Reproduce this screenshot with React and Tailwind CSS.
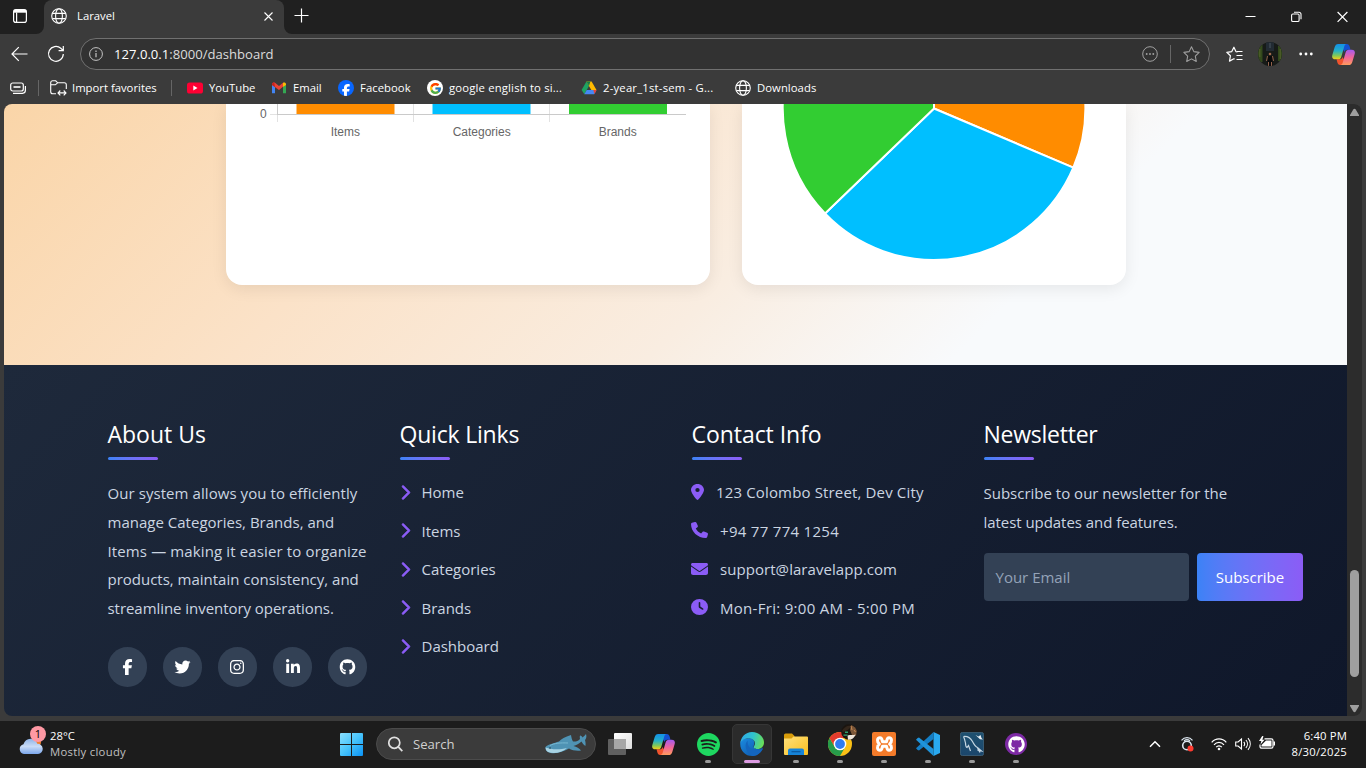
import React from "react";
import {
  FaFacebookF, FaTwitter, FaInstagram, FaLinkedinIn, FaGithub,
  FaLocationDot, FaPhone, FaEnvelope, FaClock, FaChevronRight,
} from "react-icons/fa6";
import { FcGoogle } from "react-icons/fc";
import { SiSpotify } from "react-icons/si";

const Globe = ({ className }) => (
  <svg className={className} viewBox="0 0 16 16" fill="none" stroke="currentColor" strokeWidth="1.1">
    <circle cx="8" cy="8" r="7.3" />
    <ellipse cx="8" cy="8" rx="3.4" ry="7.3" />
    <path d="M1.4 5.4h13.2M1.4 10.6h13.2" />
  </svg>
);

const Copilot = ({ className, id }) => (
  <svg className={className} viewBox="0 0 24 22">
    <defs>
      <linearGradient id={id + "a"} x1="0" y1="0" x2="0" y2="1">
        <stop offset="0" stopColor="#1390e8" /><stop offset=".45" stopColor="#25b0c8" />
        <stop offset=".75" stopColor="#7fc85a" /><stop offset="1" stopColor="#f5cf1a" />
      </linearGradient>
      <linearGradient id={id + "b"} x1="0" y1="0" x2="0" y2="1">
        <stop offset="0" stopColor="#a35af2" /><stop offset=".5" stopColor="#f0659a" /><stop offset="1" stopColor="#ff9a5c" />
      </linearGradient>
    </defs>
    <path d="M12 0h3.5c1.8 0 2.4 1 2.9 2.6L19.3 6h-3.5c-1.6 0-2.2.8-2.7 2.4L11 5Z" fill="#1450d2" />
    <path d="M12 22H8.500c-1.800 0-2.400-1-2.900-2.600L4.700 16h3.500c1.600 0 2.200-.8 2.700-2.400L13 17Z" fill="#f0532d" />
    <path d="M6.500 0H15c-1.300.3-1.900 1.300-2.300 2.800L9.800 13c-.6 2-1.600 3-3.500 3H3.400C.7 16-.4 14.200.3 11.500L2.700 3.500C3.400 1.200 4.500 0 6.500 0Z" fill={`url(#${id}a)`} />
    <path d="M17.500 22H9c1.300-.3 1.900-1.300 2.300-2.800L14.200 9c.6-2 1.600-3 3.500-3h2.900c2.700 0 3.800 1.800 3.100 4.500l-2.400 8c-.7 2.300-1.800 3.500-3.800 3.500Z" fill={`url(#${id}b)`} />
  </svg>
);

const YouTube = () => (
  <svg className="h-4 w-4" viewBox="0 0 16 16"><rect y="2.500" width="16" height="11" rx="2.600" fill="#ff0033" /><path d="m6.300 5.600 4.200 2.400-4.200 2.400Z" fill="#fff" /></svg>
);
const Gmail = () => (
  <svg className="h-4 w-4" viewBox="0 0 16 16">
    <path d="M1 4.500v8.700h3V7Z" fill="#4285f4" /><path d="M15 4.500v8.700h-3V7Z" fill="#34a853" />
    <path d="M1 4.300C1 2.600 2.900 2 4 2.800L8 6l4-3.200v4L8 10 1 4.900Z" fill="#ea4335" />
    <path d="M12 2.800c1.100-.8 3-.2 3 1.500v.6l-3 2.200Z" fill="#fbbc04" /><path d="M1 4.300C1 2.900 2.300 2.300 3.300 2.500L4 7.100 1 4.900Z" fill="#c5221f" />
  </svg>
);
const Facebook = () => (
  <span className="flex h-4 w-4 items-end justify-center overflow-hidden rounded-full bg-[#0866ff] text-white"><FaFacebookF className="-mb-px h-[13px] w-[10px]" /></span>
);
const Google = () => (
  <span className="flex h-4 w-4 items-center justify-center rounded-full bg-white"><FcGoogle className="h-[13px] w-[13px]" /></span>
);
const Drive = () => (
  <svg className="h-4 w-4" viewBox="0 0 16 16">
    <path d="M5.400 1.500 8 6 3.300 14.300.6 9.900Z" fill="#1ea362" /><path d="M5.400 1.500h5.200L15.500 10h-5.200Z" fill="#ffba00" />
    <path d="M5.700 10h9.800l-2.300 4.300H3.300Z" fill="#4688f4" /><path d="M5.400 1.500h4L8 6Z" fill="#128049" /><path d="M12.300 10h3.200l-2 4Z" fill="#ea4335" />
  </svg>
);

const bookmarks = [
  { label: "YouTube", icon: <YouTube />, w: "w-[84px]", t: "" },
  { label: "Email", icon: <Gmail />, w: "w-[67px]", t: "" },
  { label: "Facebook", icon: <Facebook />, w: "w-[89px]", t: "tracking-[0.050px]" },
  { label: "google english to si...", icon: <Google />, w: "w-[154px]", t: "tracking-[0.170px]" },
  { label: "2-year_1st-sem - G...", icon: <Drive />, w: "w-[154px]", t: "tracking-[0.200px]" },
  { label: "Downloads", icon: <Globe className="h-4 w-4" />, w: "w-[100px]", t: "tracking-[0.050px]" },
];

function TitleBar() {
  return (
    <div className="flex h-[34px] items-start bg-[#202020]">
      <div className="flex h-8 w-[36px] items-center justify-end pr-[9px]">
        <svg className="h-[14px] w-[14px]" viewBox="0 0 14 14" fill="none" stroke="currentColor" strokeWidth="1.200">
          <rect x=".6" y=".6" width="12.800" height="12.800" rx="2.200" /><path d="M1 2.300h12" strokeWidth="2.800" /><path d="M3.600 3.500v10" />
        </svg>
      </div>
      <svg className="h-[34px] w-2" viewBox="0 0 8 34"><path d="M8 26a8 8 0 0 1-8 8h8Z" fill="#3b3b3b" /></svg>
      <div className="flex h-[34px] w-[240px] items-center rounded-t-lg bg-[#3b3b3b] pl-[7px] pr-[11px] pb-[2px]">
        <Globe className="h-4 w-4" />
        <span className="ml-[10px] text-[11.300px]">Laravel</span>
        <svg className="ml-auto h-[9px] w-[9px]" viewBox="0 0 9 9" stroke="currentColor" strokeWidth="1.100"><path d="m.5.5 8 8m0-8-8 8" /></svg>
      </div>
      <svg className="h-[34px] w-2" viewBox="0 0 8 34"><path d="M0 26a8 8 0 0 0 8 8H0Z" fill="#3b3b3b" /></svg>
      <svg className="ml-[2px] mt-[8px] h-4 w-[15px]" viewBox="0 0 15 16" stroke="currentColor" strokeWidth="1.200"><path d="M.5 7.500h14M7.500.5v14" /></svg>
      <div className="ml-auto mt-[10px] flex items-center gap-[35px] pr-[18px]">
        <svg className="h-[13px] w-[11px]" viewBox="0 0 11 13" stroke="#fff"><path d="M.5 6.500h10" /></svg>
        <svg className="h-[13px] w-[11px]" viewBox="0 0 11 13" fill="none" stroke="#fff" strokeWidth="1.100"><rect x=".6" y="4" width="7.500" height="7.500" rx="1.300" /><path d="M3 2.200h5a2 2 0 0 1 2 2v5" /></svg>
        <svg className="h-[13px] w-[11px]" viewBox="0 0 11 13" stroke="#fff" strokeWidth="1.200"><path d="m.6 2 9.800 9.800m0-9.800L.6 11.800" /></svg>
      </div>
    </div>
  );
}

const starPath = "m8 .7 2.200 4.600 5 .7-3.600 3.500.9 5L8 12.100l-4.500 2.400.9-5L.8 6l5-.7Z";

function Toolbar() {
  return (
    <div className="flex h-[38px] items-center pl-[11px] pt-[2px]">
      <svg className="h-4 w-[17px]" viewBox="0 0 17 16" fill="none" stroke="currentColor" strokeWidth="1.200"><path d="M16.500 8H1M7.800 1.200 1 8l6.800 6.800" /></svg>
      <svg className="ml-[19px] h-[18px] w-[18px]" viewBox="0 0 18 18" fill="none" stroke="currentColor" strokeWidth="1.200"><path d="M16.300 9A7.400 7.400 0 1 1 13.800 3.300L16 5.400M16.300 1v4.700h-4.700" /></svg>
      <div className="ml-[15px] flex h-8 w-[1130px] items-center rounded-full border border-[#707070] bg-[#323232] pl-2 pr-[9px]">
        <svg className="h-[14px] w-[14px] text-[#c4c4c4]" viewBox="0 0 14 14" fill="none" stroke="currentColor"><circle cx="7" cy="7" r="6.400" /><path d="M7 6v4.300M7 3.600v1.300" strokeWidth="1.200" /></svg>
        <span className="ml-[11px] pt-px text-[13.100px] text-[#dcdcdc]"><span className="text-white">127.0.0.1</span>:8000/dashboard</span>
        <svg className="ml-auto h-4 w-4 text-[#a0a0a0]" viewBox="0 0 16 16" fill="currentColor"><circle cx="8" cy="8" r="7.300" fill="none" stroke="currentColor" /><circle cx="4.700" cy="8" r=".95" /><circle cx="8" cy="8" r=".95" /><circle cx="11.300" cy="8" r=".95" /></svg>
        <span className="ml-[12px] h-[18px] w-px bg-[#666]" />
        <svg className="ml-[12px] h-[17px] w-[17px] text-[#a0a0a0]" viewBox="0 0 16 16" fill="none" stroke="currentColor" strokeLinejoin="round"><path d={starPath} /></svg>
      </div>
      <svg className="ml-[16px] h-[17px] w-[17px]" viewBox="0 0 17 17" fill="none" stroke="currentColor" strokeWidth="1.200" strokeLinejoin="round"><path d="M11.500 5.800 9.900 5.600 7.900 1.200 5.800 5.600.8 6.300l3.600 3.500-.9 5.300 4.400-2.300.7.3" /><path d="M11 5.500h5.500M10.500 9.500h6M10.500 13.500h6" /></svg>
      <svg className="ml-[15px] h-6 w-6" viewBox="0 0 24 24">
        <defs><clipPath id="avatar"><circle cx="12" cy="12" r="12" /></clipPath></defs>
        <g clipPath="url(#avatar)">
          <path fill="#171b18" d="M0 0h24v24H0z" /><path d="M0 3h4.500v17H0zM20 4h4v15h-4z" fill="#33491c" /><path d="M1 7h1.500v8H1zM21.500 7H23v10h-1.500z" fill="#4a5a27" />
          <path d="M8 0h8v9H8z" fill="#222b33" /><path d="M11.300 1h1.400v5h-1.400z" fill="#3f4b55" /><path d="M9.500 14h5V24h-5z" fill="#08090b" />
          <circle cx="12" cy="12" r="1.300" fill="#a26a4d" /><path d="m9.500 14-1 5M14.500 14l1 5M10.500 20v4M13.500 20v4" stroke="#93634b" />
        </g>
      </svg>
      <svg className="ml-[17px] h-4 w-[14px]" viewBox="0 0 14 16" fill="#fff"><circle cx="1.700" cy="8" r="1.400" /><circle cx="7" cy="8" r="1.400" /><circle cx="12.300" cy="8" r="1.400" /></svg>
      <Copilot className="ml-[19px] h-[21px] w-[23px]" id="cpt" />
    </div>
  );
}

function Bookmarks() {
  return (
    <div className="flex h-8 items-center pl-[10px] text-[11.300px]">
      <svg className="h-[12px] w-4" viewBox="0 0 16 12" fill="none" stroke="currentColor" strokeWidth="1.200"><rect x=".7" y="1" width="12.600" height="8" rx="2" /><path d="M3.500 5h7" strokeWidth="1.600" /><path d="M3 11.300h9.500a3 3 0 0 0 2.900-3V4" /></svg>
      <span className="ml-[12px] h-4 w-px bg-[#666]" />
      <svg className="ml-[11px] h-4 w-[17px]" viewBox="0 0 17 16" fill="none" stroke="currentColor" strokeWidth="1.100"><path d="M6 13.700H2.700a2 2 0 0 1-2-2V2.800a2 2 0 0 1 2-2h3l2 2h6.600a2 2 0 0 1 2 2V9M.7 4.800h4.600l2.300-2M8 12.900h8M10.300 10.500 8 12.900l2.300 2.400M13.700 10.500l2.300 2.400-2.300 2.400" /></svg>
      <span className="ml-[5px] w-[99px] whitespace-nowrap">Import favorites</span>
      <span className="h-4 w-px bg-[#666]" />
      <div className="ml-[15px] flex">
        {bookmarks.map((b) => (
          <div key={b.label} className={`flex shrink-0 items-center gap-[6px] whitespace-nowrap ${b.w} ${b.t}`}>{b.icon}<span>{b.label}</span></div>
        ))}
      </div>
    </div>
  );
}

function Charts() {
  return (
    <section className="flex h-[261px] items-start gap-8 bg-[linear-gradient(135deg,#fad5a8_0%,#fbe2c8_30%,#f9ede1_56%,#f8fafc_75%)] pl-[222px]">
      <div className="h-[181px] w-[484px] rounded-b-[16px] bg-white shadow-[0_4px_16px_rgba(0,0,0,0.08)]">
        <svg className="h-[60px] w-[484px]" viewBox="226 104 484 60" fontFamily="'Liberation Sans', Arial, sans-serif" fontSize="12" fill="#666">
          <path d="M277.500 104v18M413.500 104v18M549.500 104v18M270 114.500h7" stroke="#e2e2e2" />
          <path d="M277.500 104v10" stroke="#cacaca" />
          <path fill="#ff8c00" d="M296.500 104h98v10h-98z" /><path fill="#00bfff" d="M432.500 104h98v10h-98z" /><path fill="#32cd32" d="M569 104h98v10h-98z" />
          <path d="M277 114.500h409" stroke="#cacaca" />
          <text x="260" y="118">0</text>
          <text x="345.300" y="136" textAnchor="middle">Items</text><text x="481.700" y="136" textAnchor="middle">Categories</text><text x="617.700" y="136" textAnchor="middle">Brands</text>
        </svg>
      </div>
      <div className="h-[181px] w-[384px] rounded-b-[16px] bg-white shadow-[0_4px_16px_rgba(0,0,0,0.08)]">
        <svg className="h-[160px] w-[384px]" viewBox="742 104 384 160" stroke="#fff" strokeWidth="2" strokeLinejoin="bevel">
          <path d="M934 108.500V-42.500A151 151 0 0 1 1073.300 167.700Z" fill="#ff8c00" />
          <path d="M934 108.500 1073.300 167.700A151.200 151.200 0 0 1 825 213.500Z" fill="#00bfff" />
          <path d="M934 108.500 825 213.500A151.200 151.200 0 0 1 934-42.500Z" fill="#32cd32" />
        </svg>
      </div>
    </section>
  );
}

const about = [
  ["Our system allows you to efficiently", "tracking-[0.070px]"],
  ["manage Categories, Brands, and", "tracking-[0.010px]"],
  ["Items — making it easier to organize", "tracking-[0.130px]"],
  ["products, maintain consistency, and", "tracking-[-0.010px]"],
  ["streamline inventory operations.", "tracking-[-0.050px]"],
];
const links = ["Home", "Items", "Categories", "Brands", "Dashboard"];
const contacts = [
  ["123 Colombo Street, Dev City", FaLocationDot, "w-[13px]", "tracking-[0.150px]"],
  ["+94 77 774 1254", FaPhone, "w-[17px]", "tracking-[0.300px]"],
  ["support@laravelapp.com", FaEnvelope, "w-[17px]", "tracking-[0.060px]"],
  ["Mon-Fri: 9:00 AM - 5:00 PM", FaClock, "w-[17px]", "tracking-[0.300px]"],
];
const socials = [[FaFacebookF, "w-[11px]"], [FaTwitter, "w-[17px]"], [FaInstagram, "w-4"], [FaLinkedinIn, "w-4"], [FaGithub, "w-[17px]"]];

const Column = ({ title, t, children }) => (
  <div className="w-[260px] shrink-0">
    <h3 className={`h-[38px] whitespace-nowrap text-[23px] leading-[30px] text-white ${t}`}>{title}</h3>
    <div className="mb-[20px] h-[3px] w-[50px] rounded-sm bg-gradient-to-r from-[#3b82f6] to-[#8b5cf6]" />
    {children}
  </div>
);

function Footer() {
  return (
    <footer className="flex h-[352px] gap-8 bg-[linear-gradient(135deg,#1e293b,#0f172a)] pl-[103.500px] pt-[54px] text-[15px] text-[#cbd5e1]">
      <Column title="About Us" t="">
        <div className="-mt-px whitespace-nowrap leading-[28.800px]">
          {about.map(([l, t]) => <p key={l} className={t}>{l}</p>)}
        </div>
        <div className="mt-[24px] flex gap-4">
          {socials.map(([Icon, w], i) => (
            <span key={i} className="flex h-10 w-[39.200px] shrink-0 items-center justify-center rounded-full bg-[#334155] text-white"><Icon className={`h-4 ${w}`} /></span>
          ))}
        </div>
      </Column>
      <Column title="Quick Links" t="tracking-[-0.200px]">
        <ul className="-mt-[7px]">
          {links.map((l) => (
            <li key={l} className="flex h-[38.500px] items-center gap-3"><FaChevronRight className="h-[17px] w-[10px] overflow-visible text-[#8b5cf6]" stroke="currentColor" strokeWidth="18" /><span>{l}</span></li>
          ))}
        </ul>
      </Column>
      <Column title="Contact Info" t="tracking-[-0.050px]">
        <ul className="-mt-[7px]">
          {contacts.map(([l, Icon, w, t]) => (
            <li key={l} className="flex h-[38.500px] items-center gap-3 whitespace-nowrap"><Icon className={`-ml-[0.500px] -mt-px h-4 shrink-0 text-[#8b5cf6] ${w}`} preserveAspectRatio="none" /><span className={t}>{l}</span></li>
          ))}
        </ul>
      </Column>
      <Column title="Newsletter" t="tracking-[-0.250px]">
        <p className="-mt-px whitespace-nowrap leading-[28.800px]">Subscribe to our newsletter for the<br /><span className="tracking-[-0.050px]">latest updates and features.</span></p>
        <div className="mt-[16px] flex w-[320px] gap-2 pl-[0.500px]">
          <div className="flex h-12 w-[205px] shrink-0 items-center rounded-[4px] bg-[#334155] pl-[11.500px] pt-[2px] text-[#94a3b8]">Your Email</div>
          <div className="flex h-12 w-[106px] shrink-0 items-center justify-center rounded-[4px] bg-gradient-to-r from-[#3b82f6] to-[#8b5cf6] pt-[2px] text-white">Subscribe</div>
        </div>
      </Column>
    </footer>
  );
}

function Scrollbar() {
  return (
    <div className="flex w-[15px] flex-col items-center rounded-r-lg bg-[#2c2c2c] py-1 text-[#9f9f9f]">
      <svg className="h-2 w-[9px] shrink-0" viewBox="0 0 9 8" fill="currentColor"><path d="M3.300 1.500a1.400 1.400 0 0 1 2.400 0L9 7v1H0V7Z" /></svg>
      <div className="mt-[454px] h-[107px] w-[9px] shrink-0 rounded-full bg-[#9f9f9f]" />
      <svg className="mt-[28px] h-2 w-[9px] shrink-0" viewBox="0 0 9 8" fill="currentColor"><path d="M3.300 6.500a1.400 1.400 0 0 0 2.400 0L9 1V0H0v1Z" /></svg>
    </div>
  );
}

const Windows = () => (
  <svg className="h-[23px] w-[23px]" viewBox="0 0 23 23">
    <defs><linearGradient id="win" x1="0" y1="0" x2="23" y2="23" gradientUnits="userSpaceOnUse"><stop stopColor="#8be0ff" /><stop offset=".5" stopColor="#46c3fb" /><stop offset="1" stopColor="#0a92f5" /></linearGradient></defs>
    <path d="M0 1a1 1 0 0 1 1-1h10v11H0ZM12 0h10a1 1 0 0 1 1 1v10H12ZM0 12h11v11H1a1 1 0 0 1-1-1ZM12 12h11v10a1 1 0 0 1-1 1H12Z" fill="url(#win)" />
  </svg>
);
const Shark = () => (
  <svg className="h-5 w-[42px]" viewBox="0 0 42 20">
    <path d="M.5 13C3 10.500 9 9 14 7.500 16 5 20 3 26 1 26.500 4 27 6 28 7.500c3 .3 5-.5 7-2.500-.3-1.500-.3-2.500 0-3.500 1.500.3 2 1 2.500 2C38.500 2.500 40 1.500 41 0c.8 2.500.3 4.500-1 6 .6 2 .8 4 .4 6C38.500 11 37.500 9 36.500 7.500 34 9.500 31.500 11 28.500 12c3 1 6 2.300 7.500 4.500-4 .8-9-.2-12-2C18 18 9 21 3 18 1 17 .2 15 .5 13Z" fill="#4f93b4" />
    <path d="M.7 13.500C7 16 16 15.500 22 14c-5 4.500-13 6.500-19 4C1 17 .5 15 .7 13.500Z" fill="#a8d3e3" />
    <path d="M5 11.500c5-2.500 10-2.800 18-2.500" stroke="#78b8d1" fill="none" /><circle cx="5" cy="14" r=".8" fill="#173747" />
  </svg>
);
const TaskView = () => (
  <svg className="h-6 w-6" viewBox="0 0 24 24">
    <defs><linearGradient id="tv" x1="0" y1="0" x2="1" y2="1"><stop stopColor="#fff" /><stop offset="1" stopColor="#ddd" /></linearGradient></defs>
    <path d="M1 7h16a1 1 0 0 1 1 1v14a1 1 0 0 1-1 1H1a1 1 0 0 1-1-1V8a1 1 0 0 1 1-1Z" fill="#606060" />
    <rect x="6" y="1" width="18" height="16" rx="1" fill="url(#tv)" /><path d="M6 7h12v10H6z" fill="#a7a7a7" />
  </svg>
);
const Edge = () => (
  <svg className="h-6 w-6" viewBox="0 0 24 24">
    <defs>
      <linearGradient id="eg" x1="0" y1=".3" x2="1" y2=".5"><stop stopColor="#2fa8e8" /><stop offset=".5" stopColor="#2fc3cf" /><stop offset="1" stopColor="#69df58" /></linearGradient>
      <linearGradient id="eb" x1="0" y1="0" x2="1" y2="1"><stop stopColor="#1b8be0" /><stop offset="1" stopColor="#0c51a5" /></linearGradient>
    </defs>
    <path d="M.3 10.500C2 7 6 6.300 9 6.300c4 0 6.500 3.200 5 6.700-.7 1.400-.8 3.300 2.300 3.900 3 .6 5.300-.4 6.700-1.400C21.500 20.300 17 24 12 24 5 24-.5 18 .3 10.500Z" fill="url(#eb)" />
    <path d="M8 8.500C4 11.500 4.800 20 12.500 24c4 .2 8.500-2.700 10.500-7.500-3 2-8 2.500-11.500.5C8.200 15 7 11.500 8 8.500Z" fill="#1465bd" />
    <path d="M.2 11.500C.8 5 5.500 0 12 0c7.500 0 12 5.500 12 10.500 0 4-3 6.500-6.500 6.500-2.500 0-4.300-1-3.500-2.800.6-1 1-1.700 1-2.700C15 8.500 12 6.300 8.700 6.300c-4 0-7.300 2.200-8.500 5.200Z" fill="url(#eg)" />
  </svg>
);
const Explorer = () => (
  <svg className="h-6 w-6" viewBox="0 0 24 24">
    <defs><linearGradient id="fo" x1="0" y1="0" x2="1" y2="1"><stop stopColor="#ffe17c" /><stop offset="1" stopColor="#f9be1e" /></linearGradient></defs>
    <path d="M0 3a1.500 1.500 0 0 1 1.500-1.500H8L10.500 4V9H0Z" fill="#d89c0a" /><path d="M9.500 4.500H23a1 1 0 0 1 1 1V22a1 1 0 0 1-1 1H1a1 1 0 0 1-1-1V6.500h7.500Z" fill="url(#fo)" />
    <path d="M4 18.500a2 2 0 0 1 2-2h12a2 2 0 0 1 2 2V23H4Z" fill="#1684d8" /><path d="M7.500 19h9v1.300h-9z" fill="#0b5ba3" />
  </svg>
);
const Chrome = () => (
  <svg className="h-8 w-[31px] shrink-0 translate-x-[3px] -translate-y-1" viewBox="0 0 31 32">
    <circle cx="12" cy="20" r="12" fill="#fbc116" /><path d="M1.600 14A12 12 0 0 0 12 32l5.200-9L12 20 6.800 23Z" fill="#269c4a" />
    <path d="M1.600 14A12 12 0 0 1 22.400 14H12L6.800 23Z" fill="#e33b2e" />
    <circle cx="12" cy="20" r="6.300" fill="#fff" /><circle cx="12" cy="20" r="4.900" fill="#2f7cf0" />
    <circle cx="21" cy="8" r="7.800" fill="#1b1510" /><path d="M23 1c3 1 5 3 5.800 6L28 12l-4-1-2-5Z" fill="#7a5638" /><path d="M14 7c2-4 6-6 9-5-1 3-4 5-8 6Z" fill="#33261b" />
    <path d="M19.500 11.500c3-1 6 0 8-1-1 3.500-4 5.500-7.500 5.300Z" fill="#efe6dc" /><path d="M17 7.500h3V9h-3zM15.500 10.500h4v1.200h-4z" fill="#2fa06d" /><path d="m23 2 1 4M26 6l1.500 2" stroke="#c88b54" />
  </svg>
);
const Xampp = () => (
  <span className="flex h-6 w-6 items-center justify-center rounded-[2px] bg-[#f47b2a]">
    <svg className="h-[18px] w-[19px]" viewBox="0 0 19 18" fill="none" stroke="#fff" strokeLinecap="round" strokeLinejoin="round">
      <path d="M5 2.800C2 2.800 1.600 7 4.400 9 1.600 11 2 15.200 5 15.200c2.200 0 2-2.700 2.500-4h4c.5 1.300.3 4 2.500 4 3 0 3.400-4.200.6-6.200 2.800-2 2.400-6.200-.6-6.200-2.200 0-2 2.700-2.500 4h-4C7 5.500 7.200 2.800 5 2.800Z" strokeWidth="3" />
    </svg>
  </span>
);
const VSCode = () => (
  <svg className="h-6 w-6" viewBox="0 0 24 24">
    <path d="M17.500 0 24 3v18l-6.500 3Z" fill="#29a9f0" /><path d="M17.500 0v7L3 18.500 1.600 18 0 16.300Z" fill="#147ec5" /><path d="M17.500 24v-7L3 5.500 1.600 6 0 7.700Z" fill="#1f93da" />
  </svg>
);
const Workbench = () => (
  <svg className="h-6 w-6" viewBox="0 0 24 24">
    <defs><linearGradient id="wb" x1="0" y1="0" x2="0" y2="1"><stop stopColor="#1f5170" /><stop offset="1" stopColor="#1b466c" /></linearGradient></defs>
    <rect x=".4" y=".4" width="23.200" height="23.200" rx="2" fill="url(#wb)" stroke="#47708a" strokeWidth=".7" />
    <path d="M3.500 4.500c4-.5 7 1.500 9 5 1.500 3 2.500 5 5 6l4 3.500-4-.8M3.500 4.500c1 2 1.500 4 2 6.500 0 2 .5 4 1.500 4.500l1.500-2 2 5.500M17.500 16l2.500 4.500" fill="none" stroke="#c5d6e2" strokeWidth="1.200" />
    <path d="m15.500 3 3 1.500 2-1.500 1 3 1.500 1.500-3-.3Z" fill="#e8eff4" />
  </svg>
);
const Github = () => (
  <span className="flex h-[22px] w-[22px] items-center justify-center rounded-full bg-[#7d2aa5] text-white"><FaGithub className="h-[17px] w-[17px]" /></span>
);

const apps = [
  { icon: <TaskView /> },
  { icon: <Copilot className="h-[21px] w-[23px] -translate-x-px" id="cpb" /> },
  { icon: <SiSpotify className="h-[23px] w-[23px] text-[#1ed760]" />, open: true },
  { icon: <Edge />, active: true },
  { icon: <Explorer />, open: true },
  { icon: <Chrome />, open: true },
  { icon: <Xampp />, open: true },
  { icon: <VSCode />, open: true },
  { icon: <Workbench />, open: true },
  { icon: <Github />, open: true },
];

function Taskbar() {
  return (
    <div className="flex h-[47px] items-start bg-[#1c1c1c] text-[11.300px]">
      <div className="flex w-[340px] pl-[18px] pt-[5px]">
        <div className="relative h-8 w-8">
          <svg className="mt-[12px] h-4 w-[25px]" viewBox="0 0 25 16">
            <defs><linearGradient id="cl" x1="0" y1="0" x2="0" y2="1"><stop stopColor="#8fb4e8" /><stop offset=".5" stopColor="#c9dcf7" /><stop offset="1" stopColor="#7ba7ec" /></linearGradient></defs>
            <circle cx="19" cy="4" r="4" fill="#f08030" /><path d="M6 16a5 5 0 0 1-.5-9.800C6.500 3 9 .8 12.500.8c3.500 0 6 2.200 6.700 5A5 5 0 0 1 20 16Z" fill="url(#cl)" />
          </svg>
          <span className="absolute left-[12px] top-0 flex h-4 w-4 items-center justify-center rounded-full bg-[#ff99a4] text-[11px] text-black">1</span>
        </div>
        <div className="whitespace-nowrap pt-[2px] leading-4"><div className="text-white">28°C</div><div className="tracking-[0.280px] text-[#c0c0c0]">Mostly cloudy</div></div>
      </div>
      <div className="mt-[12px]"><Windows /></div>
      <div className="ml-[13px] mt-[7px] flex h-8 w-[220px] items-center rounded-full border border-[#4b4b4b] bg-[#3b3b3b] pl-[11px] pr-2">
        <svg className="h-4 w-[15px]" viewBox="0 0 15 16" fill="none" stroke="#e0e0e0" strokeWidth="1.700"><circle cx="6.300" cy="6.800" r="5.500" /><path d="m10.300 10.800 4 4.300" /></svg>
        <span className="ml-[10px] pt-px text-[13.100px] text-[#d0d0d0]">Search</span>
        <div className="ml-auto"><Shark /></div>
      </div>
      <div className="ml-[2px] flex pt-[3px]">
        {apps.map((a, i) => (
          <div key={i} className="flex w-11 justify-center">
            <div className={`flex h-10 w-10 flex-col items-center rounded-[5px] border pt-[7px] ${a.active ? "border-[#363636] bg-[#2b2b2b]" : "border-transparent"}`}>
              <div className="flex h-6 w-8 shrink-0 items-center justify-center">{a.icon}</div>
              <div className={`mt-[4px] h-[3px] shrink-0 rounded-full ${a.active ? "w-4 bg-[#dc9be2]" : a.open ? "w-[6px] bg-[#9a9a9a]" : "w-0"}`} />
            </div>
          </div>
        ))}
      </div>
      <div className="ml-auto flex pr-[19px] text-white">
        <svg className="mr-[19px] mt-[18px] h-[10px] w-[12px]" viewBox="0 0 12 10" fill="none" stroke="currentColor" strokeWidth="1.500"><path d="m1 7.700 5-5 5 5" /></svg>
        <svg className="mr-[16px] mt-[15px] h-4 w-[15px]" viewBox="0 0 15 16" fill="none" stroke="#dce6ef" strokeWidth="1.600"><circle cx="7" cy="9.500" r="4.300" /><path d="M1.500 4.300c3-3.600 8-3.600 11 0M4 4.700c2-1.500 4-1.500 6 0" strokeWidth="1.200" /><circle cx="10.500" cy="12.500" r="3" fill="#ff3b30" stroke="none" /></svg>
        <svg className="mr-2 mt-[16px] h-[14px] w-4" viewBox="0 0 16 14" fill="none" stroke="currentColor" strokeWidth="1.200"><path d="M.7 5.300c4-4.600 10.600-4.600 14.600 0M3 7.800c2.800-3.200 7.200-3.200 10 0M5.200 10.200c1.500-1.800 4.100-1.800 5.600 0" /><circle cx="8" cy="12" r="1.300" fill="currentColor" stroke="none" /></svg>
        <svg className="mr-[8px] mt-[16px] h-[14px] w-4" viewBox="0 0 16 14" fill="none" stroke="currentColor" strokeWidth="1.100"><path d="M.7 5v4h2.400L6.500 12V2L3.100 5ZM8.800 4.800c1 1.300 1 3.100 0 4.400M10.900 3c2 2.300 2 5.700 0 8M13 1.200c3 3.500 3 8.100 0 11.600" /></svg>
        <svg className="mr-4 mt-[15px] h-[14px] w-4" viewBox="0 0 16 14" fill="none" stroke="currentColor" strokeWidth="1.200"><path d="M5.500 2.800h6.800a1.700 1.700 0 0 1 1.700 1.700v6a1.700 1.700 0 0 1-1.700 1.700H2.700A1.700 1.700 0 0 1 1 10.500V8.500" /><path d="M14.500 5.500h1.500v4h-1.500zM7 4.500h5.500v6h-10V9Z" fill="currentColor" stroke="none" /><path d="M3.200 0 0 5h2.300L1.500 8.500 5.500 3.700H3.300L4.500.3Z" fill="currentColor" stroke="none" /></svg>
        <div className="w-[56px] whitespace-nowrap pt-[7px] leading-4"><div className="flex justify-end tracking-[0.150px]">6:40 PM</div><div className="flex justify-end tracking-[0.220px]">8/30/2025</div></div>
      </div>
    </div>
  );
}

export default function App() {
  return (
    <div className="flex h-[768px] w-[1366px] flex-col overflow-hidden bg-[#3b3b3b] font-['Open_Sans','Noto_Sans',sans-serif] text-white">
      <TitleBar />
      <Toolbar />
      <Bookmarks />
      <main className="mx-1 flex h-[612px] shrink-0 overflow-hidden rounded-lg">
        <div className="w-[1343px] shrink-0"><Charts /><Footer /></div>
        <Scrollbar />
      </main>
      <div className="h-[5px] shrink-0" />
      <Taskbar />
    </div>
  );
}
